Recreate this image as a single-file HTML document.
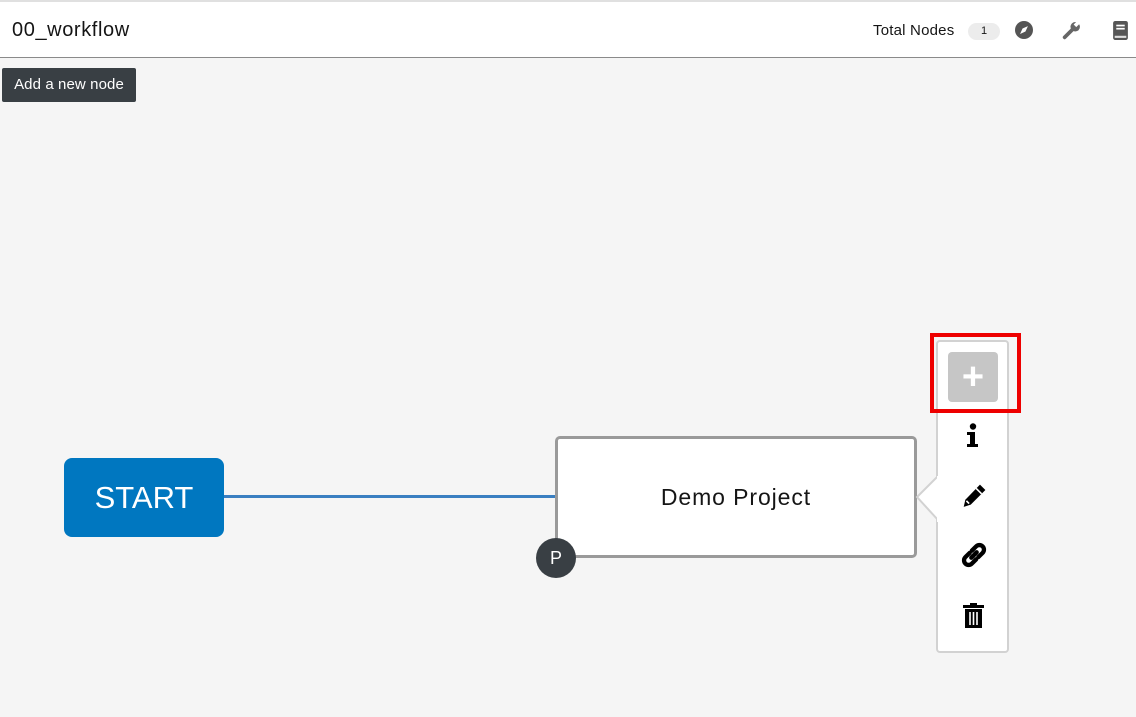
<!DOCTYPE html>
<html><head><style>
body{margin:0;width:1136px;height:717px;overflow:hidden;background:#f5f5f5;font-family:"Liberation Sans",sans-serif;position:relative}
.top{position:absolute;left:0;top:0;width:1136px;height:58px;background:#fff;border-top:2px solid #e0e0e0;border-bottom:1px solid #8a8a8a;box-sizing:border-box}
.title{position:absolute;left:12px;top:17px;font-size:20px;color:#151515;letter-spacing:0.6px}
.tn{position:absolute;left:873px;top:20px;font-size:15px;color:#151515;letter-spacing:0.2px}
.badge{position:absolute;left:968px;top:21px;width:32px;height:17px;border-radius:9px;background:#ececec;font-size:11px;text-align:center;line-height:17px;color:#151515}
.btn{position:absolute;left:2px;top:68px;width:134px;height:34px;background:#393f44;color:#fff;font-size:15px;line-height:34px;text-align:center;border-radius:2px;letter-spacing:0.1px}
.start{position:absolute;left:64px;top:458px;width:160px;height:79px;background:#0077c0;border-radius:8px;color:#fff;font-size:31px;text-align:center;line-height:79px}
.line{position:absolute;left:224px;top:495px;width:332px;height:3px;background:#3a7fc1}
.node{position:absolute;left:555px;top:436px;width:362px;height:122px;box-sizing:border-box;border:3px solid #9a9a9a;border-radius:5px;background:#fff;font-size:23px;text-align:center;line-height:116px;color:#151515;letter-spacing:0.9px}
.p{position:absolute;left:536px;top:538px;width:40px;height:40px;border-radius:50%;background:#393f44;color:#fff;font-size:18px;text-align:center;line-height:40px}
.menu{position:absolute;left:936px;top:340px;width:73px;height:313px;box-sizing:border-box;border:2px solid #d2d2d2;border-radius:4px;background:#fff}
.red{position:absolute;left:930px;top:333px;width:91px;height:80px;box-sizing:border-box;border:4px solid #ee0000}
.plus{position:absolute;left:948px;top:352px;width:50px;height:50px;background:#c6c6c6;border-radius:4px;color:#fff;font-size:38px;font-weight:bold;text-align:center;line-height:50px}
</style></head><body>
<div class="top">
<div class="title">00_workflow</div>
<div class="tn">Total Nodes</div>
<div class="badge">1</div>
<svg style="position:absolute;left:1015px;top:19px" width="18" height="18" viewBox="0 0 16 16"><circle cx="8" cy="8" r="8" fill="#555"/><path d="M11.5 4.5 L9.3 9.3 L4.5 11.5 L6.7 6.7Z" fill="#fff"/></svg>
<svg style="position:absolute;left:1062px;top:19px" width="19" height="19" viewBox="0 0 18 18"><path d="M2.5 15.5 L10 8" stroke="#666" stroke-width="3.5" stroke-linecap="round"/><circle cx="12.5" cy="5.5" r="4.5" fill="#666"/><rect x="12" y="0" width="3.5" height="5" fill="#fff" transform="rotate(45 13.5 3)"/></svg>
<svg style="position:absolute;left:1113px;top:19px" width="15" height="19" viewBox="0 0 14 18"><rect x="0" y="0" width="14" height="18" rx="2" fill="#555"/><rect x="3" y="3.5" width="8" height="1.6" fill="#fff"/><rect x="3" y="6.5" width="8" height="1.6" fill="#fff"/><rect x="1.5" y="14" width="11" height="2" fill="#ddd"/></svg>
</div>
<div class="btn">Add a new node</div>
<div class="line"></div>
<div class="start">START</div>
<div class="node">Demo Project</div>
<div class="p">P</div>
<div class="menu"></div>
<svg style="position:absolute;left:914px;top:476px" width="26" height="46" viewBox="0 0 26 46"><path d="M24 0 L3 21 L24 44" fill="#fff" stroke="#d2d2d2" stroke-width="2"/><rect x="23" y="0" width="3" height="46" fill="#fff"/></svg>
<div class="red"></div>
<div class="plus">+</div>
<svg style="position:absolute;left:965px;top:423px" width="16" height="25" viewBox="0 0 16 25"><circle cx="8" cy="3.5" r="3.2" fill="#000"/><path d="M2 9 H10 V21 H13 V24 H2 V21 H5 V12 H2Z" fill="#000"/></svg>
<svg style="position:absolute;left:961px;top:483px" width="26" height="26" viewBox="0 0 24 24"><path d="M17.5 1.5 L22.5 6.5 L9 20 L2.5 22 L4 15.5Z" fill="#000"/><path d="M5 16.5 L7.5 19" stroke="#fff" stroke-width="1.5"/><path d="M14 5 L19 10" stroke="#fff" stroke-width="1.5"/></svg>
<svg style="position:absolute;left:960px;top:541px" width="28" height="28" viewBox="0 0 26 26"><g fill="none" stroke="#000" stroke-width="4" stroke-linecap="round"><path d="M11 9 L15 5 a4 4 0 0 1 6 6 L17 15"/><path d="M15 17 L11 21 a4 4 0 0 1 -6 -6 L9 11"/><path d="M10.5 15.5 L15.5 10.5"/></g></svg>
<svg style="position:absolute;left:963px;top:603px" width="21" height="25" viewBox="0 0 21 25"><rect x="0" y="2" width="21" height="3" fill="#000"/><rect x="7" y="0" width="7" height="3" fill="#000"/><path d="M2 6 H19 V25 H2Z" fill="#000"/><g stroke="#fff" stroke-width="1.6"><path d="M7 9 V22 M10.5 9 V22 M14 9 V22"/></g></svg>
</body></html>
